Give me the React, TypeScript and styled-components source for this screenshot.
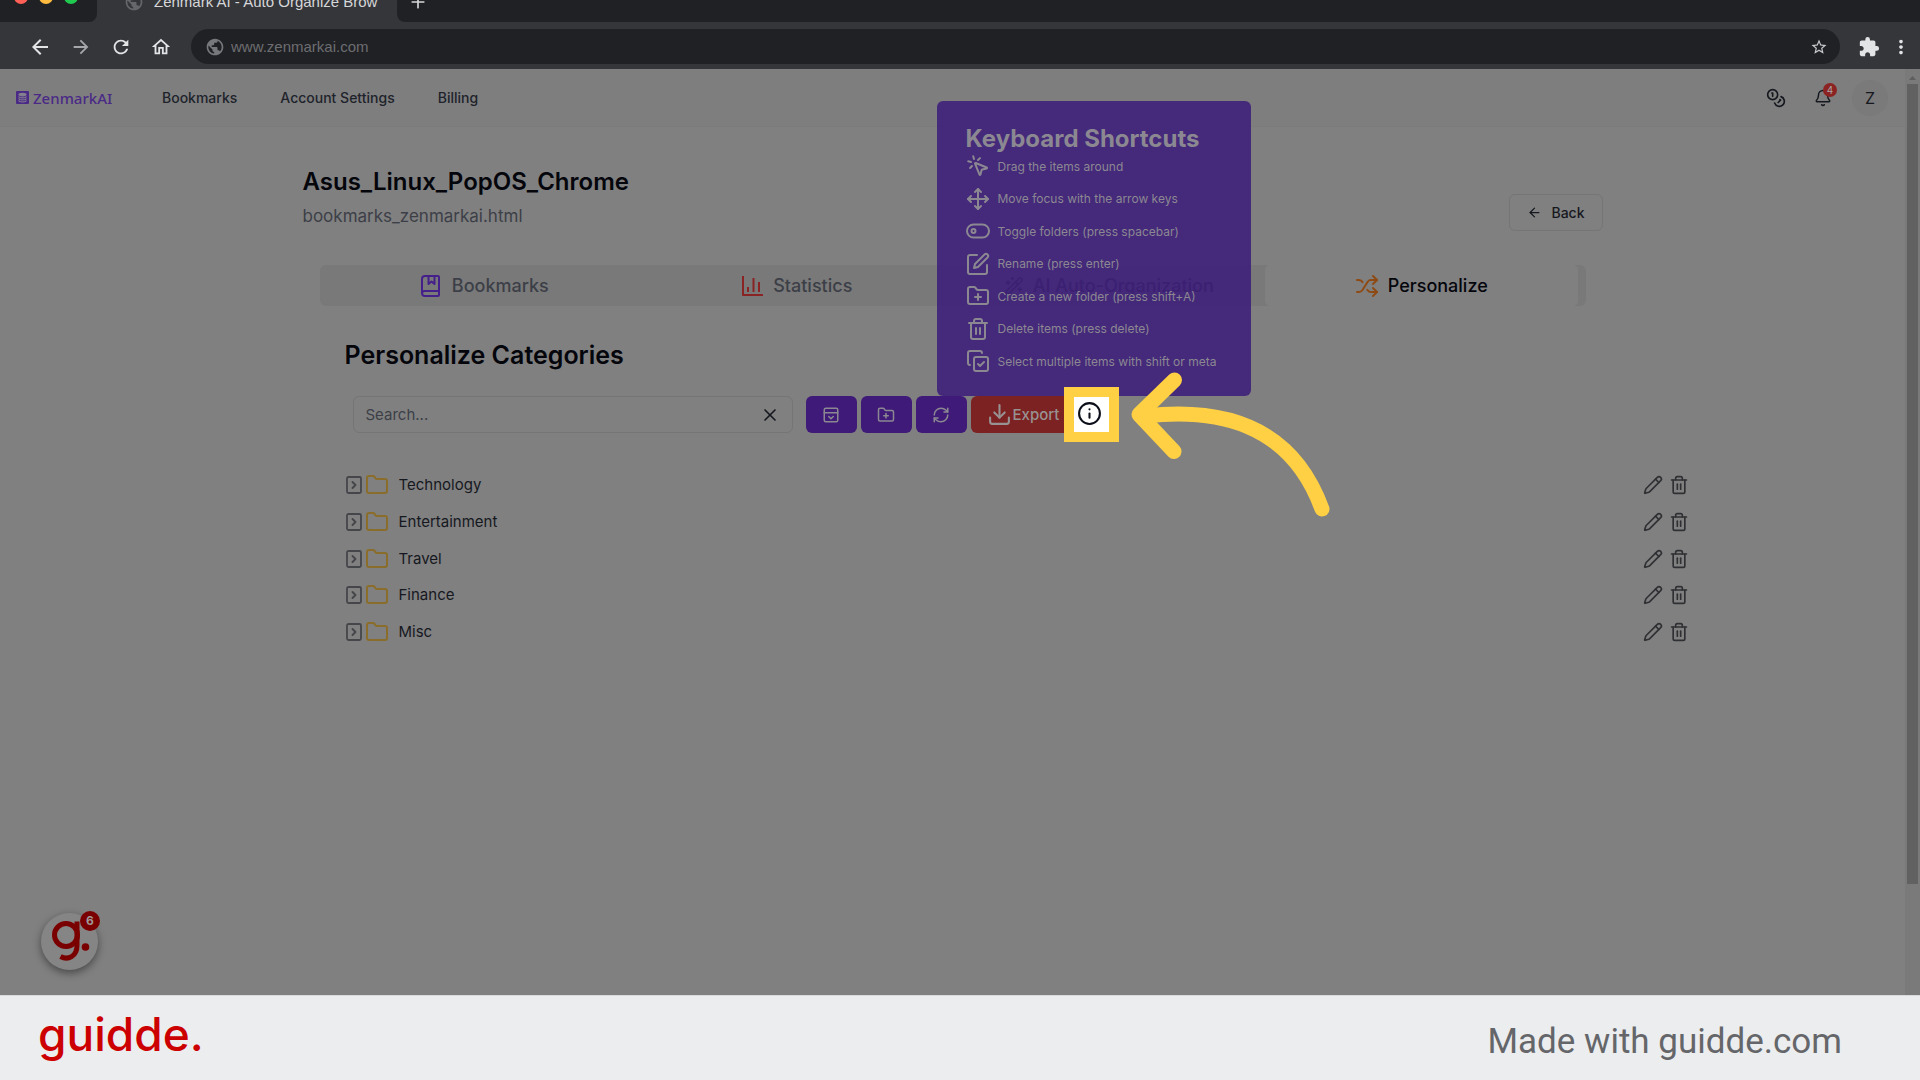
import React from "react";
import styled, { createGlobalStyle } from "styled-components";
import {
  ArrowLeft,
  Bell,
  Coins,
  CopyCheck,
  Download,
  Folder,
  FolderPlus,
  Info,
  MousePointerClick,
  Move,
  PanelTopOpen,
  Pencil,
  Plus,
  RefreshCw,
  Shuffle,
  Trash2,
  WandSparkles,
  X,
} from "lucide-react";
import {
  MdArrowBack,
  MdArrowForward,
  MdExtension,
  MdMoreVert,
  MdOutlineHome,
  MdPublic,
  MdRefresh,
  MdStarBorder,
} from "react-icons/md";

const color = {
  strip: "#202124",
  toolbar: "#35363a",
  page: "#808080",
  border: "#757575",
  ink: "#05060c",
  body: "#161820",
  muted: "#3c3f47",
  purple: "#3f1a78",
  purpleCard: "rgba(59, 27, 121, 0.86)",
  onDark: "#8b8892",
  highlight: "#ffd043",
};

const GlobalStyle = createGlobalStyle`
  * { box-sizing: border-box; }
  body { margin: 0; background: ${color.page}; font-family: Inter, "Liberation Sans", sans-serif; }
  button { font: inherit; color: inherit; background: none; border: 0; padding: 0; margin: 0; }
  a { color: inherit; text-decoration: none; }
  h1, h2, h3, p, ul { margin: 0; padding: 0; }
  ul { list-style: none; }
  svg { display: block; flex: none; }
`;

const Screen = styled.div`
  min-height: 100vh;
  display: flex;
  flex-direction: column;
  overflow: hidden;
`;

/* ---------- Browser chrome ---------- */

const TabStrip = styled.div`
  display: flex;
  height: 22px;
  background: ${color.toolbar};
  overflow: hidden;
`;

const WindowControls = styled.div`
  display: flex;
  gap: 11px;
  width: 97px;
  padding-left: 14px;
  background: ${color.strip};
  border-bottom-right-radius: 8px;
`;

const Light = styled.span<{ $fill: string }>`
  width: 14px;
  height: 14px;
  margin-top: -10px;
  border-radius: 50%;
  background: ${(p) => p.$fill};
`;

const BrowserTab = styled.div`
  display: flex;
  align-items: center;
  gap: 10px;
  width: 300px;
  height: 22px;
  margin-top: -9px;
  padding: 0 19px 0 27px;
  color: #66676b;
`;

const TabTitle = styled.span`
  flex: 1;
  overflow: hidden;
  white-space: nowrap;
  color: #d6d7d9;
  font: 15px/22px "Liberation Sans", Arial, sans-serif;
`;

const StripRest = styled.div`
  flex: 1;
  padding-left: 11px;
  background: ${color.strip};
  border-bottom-left-radius: 8px;
  color: #d6d7d9;
`;

const NewTab = styled.button`
  display: block;
  margin-top: -8px;
`;

const AddressBar = styled.div`
  display: flex;
  align-items: center;
  gap: 18px;
  height: 47px;
  padding: 2px 8px 0 28px;
  background: ${color.toolbar};
  color: #e3e4e6;
`;

const ChromeButton = styled.button<{ $dim?: boolean }>`
  opacity: ${(p) => (p.$dim ? 0.65 : 1)};
`;

const UrlField = styled.div`
  flex: 1;
  display: flex;
  align-items: center;
  gap: 6px;
  height: 35px;
  margin-left: 1px;
  padding: 0 12px 0 14px;
  border-radius: 18px;
  background: ${color.strip};
  color: #77787c;
`;

const UrlInput = styled.input`
  flex: 1;
  border: 0;
  padding: 0;
  outline: 0;
  background: none;
  color: #6c6d71;
  font: 15px/20px "Liberation Sans", Arial, sans-serif;
`;

const ChromeActions = styled.div`
  display: flex;
  align-items: center;
  gap: 10px;
`;

/* ---------- Page ---------- */

const Viewport = styled.div`
  flex: 1;
  display: flex;
  background: ${color.page};
`;

const Page = styled.div`
  position: relative;
  flex: 1;
  min-width: 0;
`;

const ScrollTrack = styled.div`
  width: 15px;
  padding: 7px 2px 0;
  background: #7a7a7a;
  display: flex;
  flex-direction: column;
  gap: 4px;
`;

const ScrollArrow = styled.span`
  height: 4px;
  margin: 0 2px;
  background: #5e5e5e;
  clip-path: polygon(50% 0, 100% 100%, 0 100%);
`;

const ScrollThumb = styled.span`
  height: 87%;
  background: #616161;
`;

const NavBar = styled.header`
  display: flex;
  align-items: center;
  height: 58px;
  padding: 0 17px 0 16px;
  background: #7e7e7e;
  border-bottom: 1px solid #7b7b7b;
`;

const Brand = styled.a`
  display: flex;
  align-items: center;
  gap: 4px;
  width: 146px;
  color: #4a2a86;
  font: 500 15px/24px "Noto Sans", sans-serif;
`;

const NavLinks = styled.nav`
  display: flex;
  flex: 1;
  gap: 43px;
  color: #20232b;
  font-size: 14px;
  font-weight: 500;
  line-height: 20px;
`;

const NavActions = styled.div`
  display: flex;
  align-items: center;
  color: ${color.body};
`;

const BellButton = styled.button`
  position: relative;
  margin: 0 20px 0 28px;
`;

const Count = styled.span<{ $size: number; $fill: string }>`
  position: absolute;
  top: ${(p) => (p.$size > 16 ? "-2px" : "-6px")};
  right: ${(p) => (p.$size > 16 ? "-2px" : "-5px")};
  width: ${(p) => p.$size}px;
  height: ${(p) => p.$size}px;
  border-radius: 50%;
  background: ${(p) => p.$fill};
  color: #a8a4a4;
  font-size: ${(p) => (p.$size > 16 ? 12 : 10)}px;
  line-height: ${(p) => p.$size}px;
  font-weight: ${(p) => (p.$size > 16 ? 700 : 400)};
  text-align: center;
`;

const Avatar = styled.button`
  width: 36px;
  height: 36px;
  border-radius: 50%;
  background: #7a7a7a;
  font-size: 16px;
`;

const Container = styled.main`
  max-width: 1300px;
  margin: 0 auto;
  padding-top: 39px;
`;

const TitleRow = styled.div`
  display: flex;
  align-items: flex-end;
  justify-content: space-between;
`;

const TitleBlock = styled.div`
  padding-bottom: 3px;
`;

const Title = styled.h1`
  color: ${color.ink};
  font-size: 24px;
  font-weight: 600;
  line-height: 32px;
`;

const FileName = styled.p`
  margin-top: 6px;
  color: ${color.muted};
  font-size: 17px;
  line-height: 24px;
`;

const BackButton = styled.button`
  display: flex;
  align-items: center;
  gap: 9px;
  height: 37px;
  padding: 0 17px;
  border: 1px solid ${color.border};
  border-radius: 6px;
  color: ${color.body};
  font-size: 14px;
  font-weight: 500;
`;

const Tabs = styled.div`
  display: grid;
  grid-template-columns: repeat(4, 1fr);
  margin: 34px 17px 0;
  padding: 0 8px;
  border-radius: 6px;
  background: #797979;
`;

const Tab = styled.button<{ $active?: boolean }>`
  display: flex;
  align-items: center;
  justify-content: center;
  gap: 9px;
  height: 41px;
  border-radius: 5px;
  background: ${(p) => (p.$active ? color.page : "none")};
  color: ${(p) => (p.$active ? color.ink : color.muted)};
  font-size: 18px;
  font-weight: 500;
  line-height: 24px;
`;

const Panel = styled.section`
  margin: 33px -86px 0 42px;
`;

const PanelTitle = styled.h2`
  color: ${color.ink};
  font-size: 25px;
  font-weight: 600;
  line-height: 32px;
`;

const Toolbar = styled.div`
  display: flex;
  align-items: center;
  gap: 4px;
  margin: 25px 0 0 8px;
`;

const SearchBox = styled.label`
  display: flex;
  align-items: center;
  width: 440px;
  height: 37px;
  margin-right: 9px;
  padding: 0 12px;
  border: 1px solid ${color.border};
  border-radius: 6px;
  color: ${color.body};
`;

const SearchInput = styled.input`
  flex: 1;
  border: 0;
  padding: 0;
  outline: 0;
  background: none;
  font: 15px/20px Inter, sans-serif;
  color: ${color.body};
  &::placeholder { color: ${color.muted}; opacity: 1; }
`;

const ToolButton = styled.button`
  display: grid;
  place-items: center;
  position: relative;
  z-index: 2;
  width: 51px;
  height: 37px;
  border-radius: 6px;
  background: ${color.purple};
  color: ${color.onDark};
`;

const ExportButton = styled.button`
  display: flex;
  align-items: center;
  gap: 1px;
  width: 99px;
  height: 37px;
  padding-left: 16px;
  border-radius: 6px;
  background: #7c2222;
  color: #989292;
  font-size: 15px;
  font-weight: 500;
`;

const InfoAnchor = styled.div`
  position: relative;
`;

const InfoButton = styled.button`
  position: relative;
  z-index: 3;
  display: grid;
  place-items: center;
  width: 35px;
  height: 35px;
  padding: 0 3px 2px 0;
  background: #ffffff;
  color: #0c0f1a;
  outline: 10px solid ${color.highlight};
`;

const PointerArrow = styled.svg`
  position: absolute;
  z-index: 3;
  left: 56px;
  top: -26px;
`;

const Shortcuts = styled.div`
  position: absolute;
  z-index: 1;
  left: -137px;
  bottom: 36px;
  width: 314px;
  padding: 24px 29px 22px;
  border-radius: 6px;
  background: ${color.purpleCard};
  color: ${color.onDark};
`;

const ShortcutsTitle = styled.h3`
  font-size: 24px;
  font-weight: 700;
  line-height: 28px;
  white-space: nowrap;
`;

const ShortcutList = styled.ul`
  display: flex;
  flex-direction: column;
  justify-content: space-between;
  height: 221px;
`;

const Shortcut = styled.li`
  display: flex;
  align-items: center;
  gap: 8px;
  height: 26px;
  font-size: 12px;
  white-space: nowrap;
`;

const Tree = styled.ul`
  display: flex;
  flex-direction: column;
  justify-content: space-between;
  height: 171px;
  margin-top: 40px;
`;

const TreeRow = styled.li`
  display: flex;
  align-items: center;
  height: 24px;
  color: ${color.body};
`;

const FolderName = styled.span`
  flex: 1;
  padding-left: 10px;
  font-size: 15px;
  line-height: 24px;
`;

const RowAction = styled.button`
  margin-left: 6px;
  color: #2f3033;
`;

const Expander = styled.button`
  color: #45464a;
  margin-right: 2px;
`;

const Launcher = styled.button`
  position: absolute;
  left: 41px;
  bottom: 25px;
  width: 57px;
  height: 57px;
  border-radius: 50%;
  background: #858585;
  box-shadow: 0 3px 8px rgba(0, 0, 0, 0.45);
`;

const LauncherBadge = styled(Count)`
  color: #9f9a9a;
`;

/* ---------- Footer ---------- */

const Footer = styled.footer`
  display: flex;
  justify-content: space-between;
  align-items: center;
  height: 85px;
  padding: 0 78px 0 38px;
  background: #ecedef;
  border-top: 1px solid #d9dadc;
`;

const Wordmark = styled.a`
  padding-bottom: 8px;
  color: #cc0000;
  font: 500 46px/60px Inter, sans-serif;
`;

const Credit = styled.p`
  padding-top: 7px;
  color: #656669;
  font: 35px/44px Roboto, sans-serif;
`;

/* ---------- Drawn icons ---------- */

const stroke = {
  fill: "none",
  stroke: "currentColor",
  strokeWidth: 2,
  strokeLinecap: "round" as const,
  strokeLinejoin: "round" as const,
};

const LayersMark = () => (
  <svg width="13" height="13" viewBox="0 0 13 13">
    <rect width="13" height="13" rx="1" fill="#4a2a86" />
    <g fill="none" stroke="#85808f" strokeWidth="1.200">
      <ellipse cx="6.500" cy="3.600" rx="3.500" ry="1.200" fill="#85808f" />
      <path d="M2.500 5.400c1 2 7 2 8 0M2.500 7.500c1 2 7 2 8 0M2.500 9.500c1 2 7 2 8 0" />
    </g>
  </svg>
);

const BookIcon = () => (
  <svg width="24" height="24" viewBox="0 0 24 24" {...stroke} color="#46208a">
    <path d="M20 17V3a1 1 0 0 0-1-1H6a3 3 0 0 0-3 3v14a3 3 0 0 0 3 3h13a1 1 0 0 0 1-1v-4H5.500a2.500 2.500 0 0 0-2.500 2.500" />
    <path d="M9.500 2v8l3-2.500 3 2.500V2" />
  </svg>
);

const StatsIcon = () => (
  <svg width="24" height="24" viewBox="0 0 24 24" {...stroke} strokeLinecap="butt" color="#8a2424">
    <path d="M3 2v19h20M8 18v-5M13.500 18V4M19 18V8" />
  </svg>
);

const ToggleIcon = () => (
  <svg width="24" height="24" viewBox="0 0 24 24" {...stroke}>
    <rect x="1" y="5.500" width="22" height="13" rx="6.500" />
    <circle cx="7.500" cy="12" r="2" />
  </svg>
);

const RenameIcon = () => (
  <svg width="24" height="24" viewBox="0 0 24 24" {...stroke}>
    <path d="M11 3H4a2 2 0 0 0-2 2v15a2 2 0 0 0 2 2h15a2 2 0 0 0 2-2v-7" />
    <path d="M18.500 2.500a2.120 2.120 0 0 1 3 3L12 15l-4 1 1-4Z" />
  </svg>
);

const ExpandIcon = () => (
  <svg width="18" height="18" viewBox="0 0 18 18" {...stroke}>
    <rect x="2" y="1" width="14" height="16" rx="1.500" strokeWidth="1.800" />
    <path d="M7.500 6l3 3-3 3" strokeWidth="1.900" />
  </svg>
);

const GuiddeMark = () => (
  <svg width="57" height="57" viewBox="0 0 57 57" fill="none" stroke="#7a0000" strokeWidth="5">
    <circle cx="25" cy="22" r="11.500" />
    <path d="M36 8.500v24c0 11-9 15-16.500 11" />
    <circle cx="44.500" cy="34" r="3.800" fill="#7a0000" stroke="none" />
  </svg>
);

const shortcuts = [
  { icon: <MousePointerClick size={24} />, label: "Drag the items around" },
  { icon: <Move size={24} />, label: "Move focus with the arrow keys" },
  { icon: <ToggleIcon />, label: "Toggle folders (press spacebar)" },
  { icon: <RenameIcon />, label: "Rename (press enter)" },
  { icon: <FolderPlus size={24} />, label: "Create a new folder (press shift+A)" },
  { icon: <Trash2 size={24} />, label: "Delete items (press delete)" },
  { icon: <CopyCheck size={24} />, label: "Select multiple items with shift or meta" },
];

const folders = ["Technology", "Entertainment", "Travel", "Finance", "Misc"];

function BrowserChrome() {
  return (
    <>
      <TabStrip>
        <WindowControls>
          <Light $fill="#fe5f57" />
          <Light $fill="#febb40" />
          <Light $fill="#1fca4f" />
        </WindowControls>
        <BrowserTab>
          <MdPublic size={20} />
          <TabTitle>Zenmark AI - Auto Organize Browser Bookmarks</TabTitle>
        </BrowserTab>
        <StripRest>
          <NewTab aria-label="New tab">
            <Plus size={20} />
          </NewTab>
        </StripRest>
      </TabStrip>
      <AddressBar>
        <ChromeButton aria-label="Back"><MdArrowBack size={24} /></ChromeButton>
        <ChromeButton aria-label="Forward" $dim><MdArrowForward size={22} /></ChromeButton>
        <ChromeButton aria-label="Reload"><MdRefresh size={22} /></ChromeButton>
        <ChromeButton aria-label="Home"><MdOutlineHome size={22} /></ChromeButton>
        <UrlField>
          <MdPublic size={20} />
          <UrlInput aria-label="Address" defaultValue="www.zenmarkai.com" />
          <ChromeButton aria-label="Bookmark this page">
            <MdStarBorder size={18} color="#c8c9cb" />
          </ChromeButton>
        </UrlField>
        <ChromeActions>
          <ChromeButton aria-label="Extensions"><MdExtension size={22} /></ChromeButton>
          <ChromeButton aria-label="Menu"><MdMoreVert size={22} /></ChromeButton>
        </ChromeActions>
      </AddressBar>
    </>
  );
}

function ShortcutCard() {
  return (
    <Shortcuts role="tooltip">
      <ShortcutsTitle>Keyboard Shortcuts</ShortcutsTitle>
      <ShortcutList>
        {shortcuts.map((s) => (
          <Shortcut key={s.label}>
            {s.icon}
            {s.label}
          </Shortcut>
        ))}
      </ShortcutList>
    </Shortcuts>
  );
}

export default function App() {
  return (
    <Screen>
      <GlobalStyle />
      <BrowserChrome />
      <Viewport>
        <Page>
          <NavBar>
            <Brand href="#home">
              <LayersMark />
              ZenmarkAI
            </Brand>
            <NavLinks>
              <a href="#bookmarks">Bookmarks</a>
              <a href="#account">Account Settings</a>
              <a href="#billing">Billing</a>
            </NavLinks>
            <NavActions>
              <button aria-label="Credits"><Coins size={20} /></button>
              <BellButton aria-label="Notifications">
                <Bell size={18} />
                <Count $size={14} $fill="#8c2323">4</Count>
              </BellButton>
              <Avatar>Z</Avatar>
            </NavActions>
          </NavBar>
          <Container>
            <TitleRow>
              <TitleBlock>
                <Title>Asus_Linux_PopOS_Chrome</Title>
                <FileName>bookmarks_zenmarkai.html</FileName>
              </TitleBlock>
              <BackButton>
                <ArrowLeft size={15} />
                Back
              </BackButton>
            </TitleRow>
            <Tabs role="tablist">
              <Tab role="tab"><BookIcon />Bookmarks</Tab>
              <Tab role="tab"><StatsIcon />Statistics</Tab>
              <Tab role="tab"><WandSparkles size={20} />AI Auto-Organization</Tab>
              <Tab role="tab" $active aria-selected>
                <Shuffle size={24} color="#8e4a14" />
                Personalize
              </Tab>
            </Tabs>
            <Panel>
              <PanelTitle>Personalize Categories</PanelTitle>
              <Toolbar>
                <SearchBox>
                  <SearchInput aria-label="Search" placeholder="Search..." />
                  <button aria-label="Clear search"><X size={20} /></button>
                </SearchBox>
                <ToolButton aria-label="Expand all"><PanelTopOpen size={18} /></ToolButton>
                <ToolButton aria-label="New folder"><FolderPlus size={18} /></ToolButton>
                <ToolButton aria-label="Refresh"><RefreshCw size={18} /></ToolButton>
                <ExportButton>
                  <Download size={25} />
                  Export
                </ExportButton>
                <InfoAnchor>
                  <InfoButton aria-label="Keyboard shortcuts"><Info size={25} /></InfoButton>
                  <ShortcutCard />
                  <PointerArrow
                    width="202"
                    height="150"
                    viewBox="1130 372 202 150"
                    fill="none"
                    stroke={color.highlight}
                    strokeWidth="15"
                    strokeLinecap="round"
                    strokeLinejoin="round"
                  >
                    <path d="M1174.500 381L1139 415.500L1174 452.500" />
                    <path d="M1145 417C1215 409 1290 422 1322 510" />
                  </PointerArrow>
                </InfoAnchor>
              </Toolbar>
              <Tree>
                {folders.map((name) => (
                  <TreeRow key={name}>
                    <Expander aria-label={`Expand ${name}`}><ExpandIcon /></Expander>
                    <Folder size={24} strokeWidth={2} color="#8a6d2b" />
                    <FolderName>{name}</FolderName>
                    <RowAction aria-label={`Rename ${name}`}><Pencil size={20} /></RowAction>
                    <RowAction aria-label={`Delete ${name}`}><Trash2 size={20} /></RowAction>
                  </TreeRow>
                ))}
              </Tree>
            </Panel>
          </Container>
          <Launcher aria-label="Open guides">
            <GuiddeMark />
            <LauncherBadge $size={20} $fill="#7a0000">6</LauncherBadge>
          </Launcher>
        </Page>
        <ScrollTrack>
          <ScrollArrow />
          <ScrollThumb />
        </ScrollTrack>
      </Viewport>
      <Footer>
        <Wordmark href="#guidde">guidde.</Wordmark>
        <Credit>Made with guidde.com</Credit>
      </Footer>
    </Screen>
  );
}
